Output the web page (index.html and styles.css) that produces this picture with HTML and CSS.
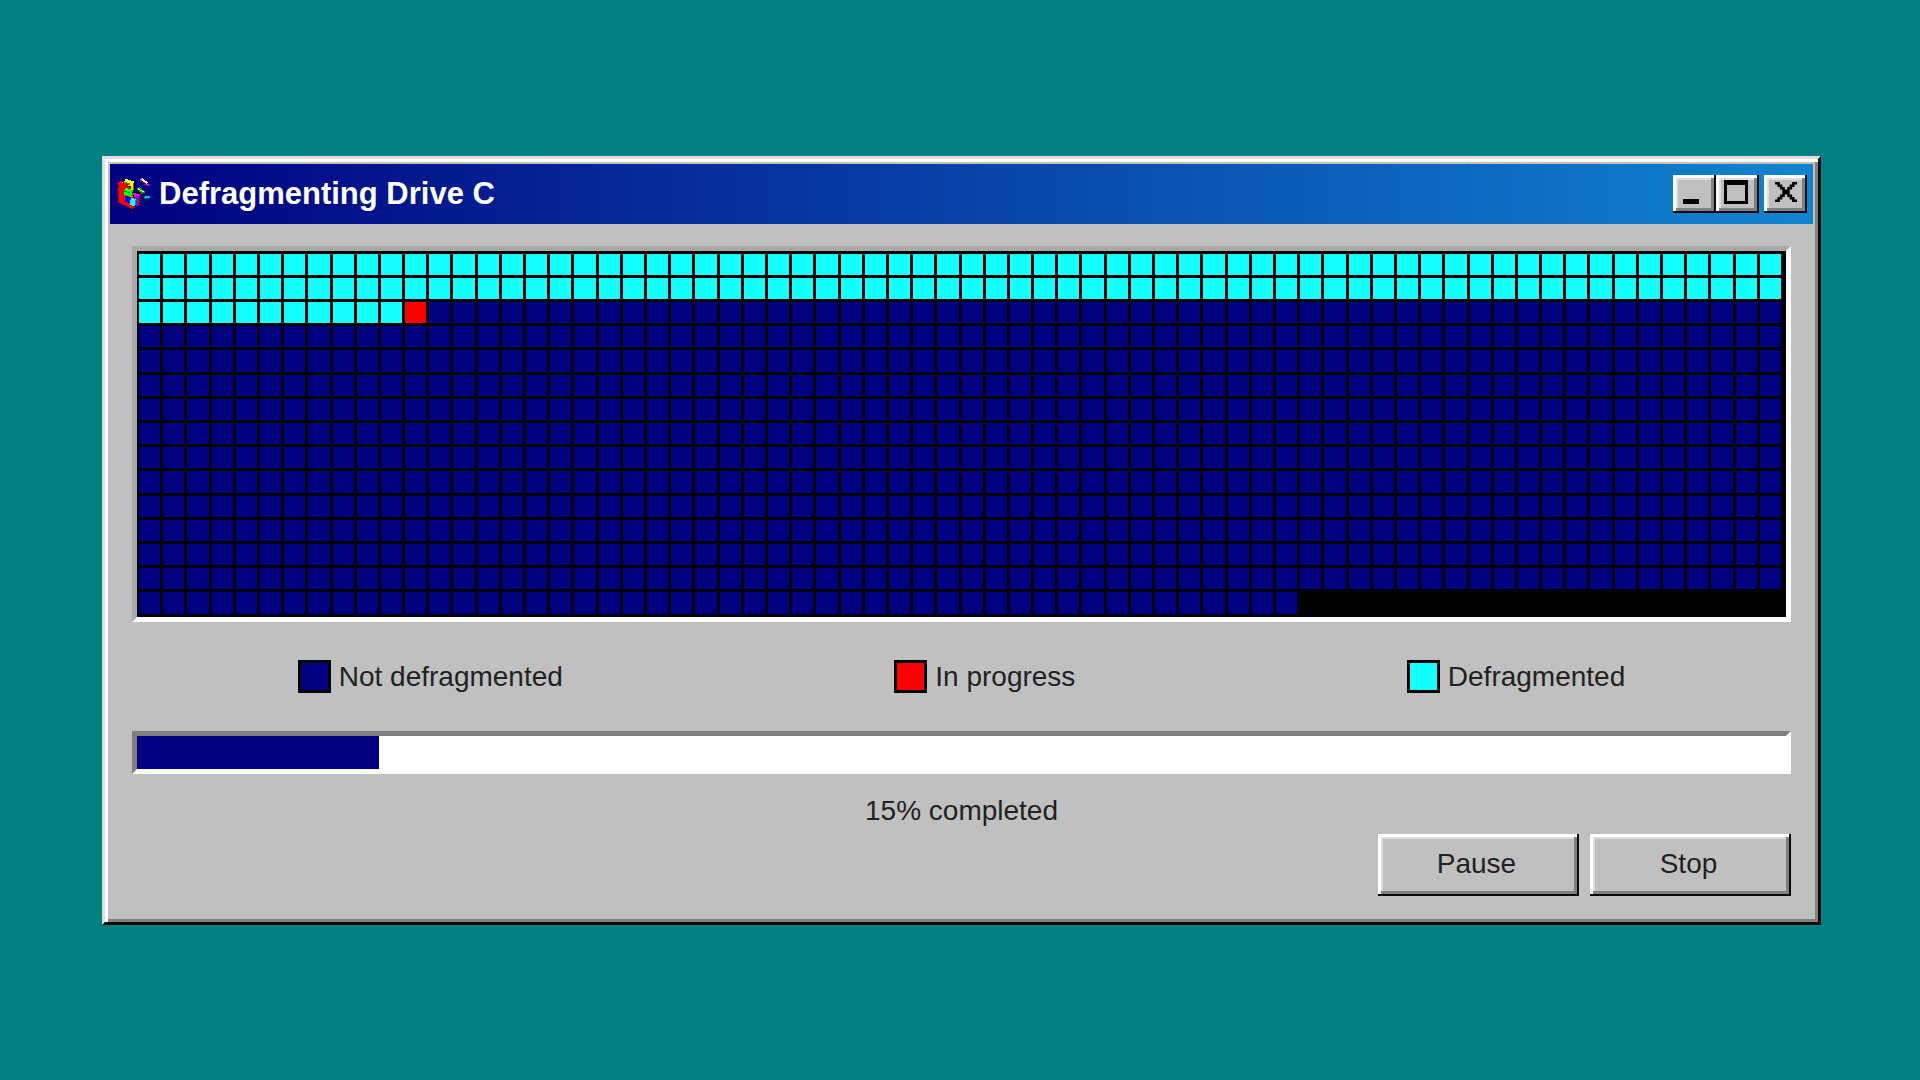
FILE: index.html
```html
<!DOCTYPE html>
<html lang="en">
<head>
<meta charset="utf-8">
<title>Defragmenting Drive C</title>
<link rel="stylesheet" href="styles.css">
</head>
<body>
<main class="window">
  <header class="titlebar">
    <svg class="app-icon" viewBox="0 0 120 120" aria-hidden="true">
      <path fill="#000" d="M54 24h9v30h12v3h5v36h-9v3h-8v6h-6v5h-9v-5h9z"/>
      <path fill="#f00" d="M12 24h6v-3h9v3h9v6h9v9h12v66h-6v-3h-6v-3h-6v-4h-9v-4h-9v-5h-9z"/>
      <path fill="#a00" d="M12 27h3v57h-3zM27 24h6v3h9v6h-6v-3h-9zM57 96h6v6h-6z"/>
      <path fill="#ff0" d="M33 15h9v3h9v3h9v27h-9v-12h-9v-6h-12v-9h3z"/>
      <path fill="#860" d="M57 27h3v24h-3zM30 24h9v3h9v6h-6v-3h-12z"/>
      <path fill="#fff" d="M36 18h3v3h-3zM42 21h3v3h-3zM48 21h3v3h-3zM24 24h3v3h-3z"/>
      <path fill="#0f0" d="M30 48h3v-6h9v3h9v3h6v21h-12v-3h-9v-3h-6z"/>
      <path fill="#090" d="M54 48h3v18h-3zM30 51h9v3h9v3h-9v-3h-9z"/>
      <path fill="#00f" d="M33 66h9v3h9v18h-9v-3h-9z"/>
      <path fill="#f0f" d="M57 57h9v3h12v9h-18v-6h-3z"/>
      <path fill="#a0a" d="M60 69h6v-3h12v27h-6v3h-6v-18h-6z"/>
      <path fill="#606" d="M75 66h3v27h-3z"/>
      <path fill="#0ff" d="M48 78h3v-6h9v3h6v18h-3v3h-9v-3h-6z"/>
      <path fill="#099" d="M63 78h3v15h-3z"/>
      <path fill="#fff" d="M36 45h3v3h-3zM42 48h3v3h-3zM54 75h3v3h-3z"/>
      <path fill="#f0f" d="M78 15h6v3h3v3h3v3h6v3h3v3h6v6h-6v-3h-6v-3h-3v-3h-6v-6h-6z"/>
      <path fill="#fff" d="M84 12h3v3h3v3h3v3h6v3h3v3h-3v3h-3v-3h-3v-3h-6v-3h-3v-3h-3z"/>
      <path fill="#606" d="M84 21h3v3h3v3h6v3h-6v-3h-6z"/>
      <path fill="#0a0" d="M69 42h6v-3h3v3h6v6h6v3h3v6h-6v3h-6v-6h-6v-6h-6z"/>
      <path fill="#cfc" d="M72 42h3v3h3v3h6v3h6v3h-6v-3h-6v-3h-6z"/>
      <path fill="#0cc" d="M90 69h3v-3h15v6h-3v3h-15z"/>
      <path fill="#055" d="M90 72h15v3h-15z"/>
    </svg>
    <h1 class="title">Defragmenting Drive C</h1>
    <div class="controls">
      <button class="control" type="button" aria-label="Minimize">
        <svg class="glyph" viewBox="0 0 24 24" shape-rendering="crispEdges"><path d="M2 19h16v5H2z"/></svg>
      </button>
      <button class="control" type="button" aria-label="Maximize">
        <svg class="glyph" viewBox="0 0 24 24" shape-rendering="crispEdges"><path fill-rule="evenodd" d="M0 0h24v24H0zM3 5v16h18V5z"/></svg>
      </button>
      <button class="control control-close" type="button" aria-label="Close">
        <svg class="glyph-close" viewBox="0 0 9 8" preserveAspectRatio="none"><path d="M0 0h2v1h1v1h1v1h1v-1h1v-1h1v-1h2v1h-1v1h-1v1h-1v2h1v1h1v1h1v1h-2v-1h-1v-1h-1v-1h-1v1h-1v1h-1v1h-2v-1h1v-1h1v-1h1v-2h-1v-1h-1v-1h-1z"/></svg>
      </button>
    </div>
  </header>

  <div class="content">
    <div class="board" id="board" role="img" aria-label="Drive map"></div>

    <ul class="legend">
      <li class="legend-item"><span class="swatch pending"></span>Not defragmented</li>
      <li class="legend-item"><span class="swatch active"></span>In progress</li>
      <li class="legend-item"><span class="swatch done"></span>Defragmented</li>
    </ul>

    <progress class="progress" id="progress" max="1000" value="147"></progress>
    <label class="status" for="progress">15% completed</label>

    <div class="actions">
      <button class="action" type="button">Pause</button>
      <button class="action" type="button">Stop</button>
    </div>
  </div>
</main>
<script src="board.js"></script>
</body>
</html>
```
FILE: styles.css
```css
* {
  box-sizing: border-box;
}

body {
  margin: 0;
  min-height: 100vh;
  padding: 0 99px 0 102px;
  display: flex;
  align-items: center;
  background: #008080;
  color: #222;
  font: 28px/36px "Liberation Sans", Arial, sans-serif;
}

.window {
  flex: 1;
  min-width: 0;
  padding: 5px;
  background: #c0c0c0;
  border: 3px solid;
  border-color: #dfdfdf #0a0a0a #0a0a0a #dfdfdf;
  box-shadow: inset 3px 3px #fff, inset -3px -3px #808080;
}

.titlebar {
  display: flex;
  align-items: center;
  height: 60px;
  padding: 0 6px 0 4px;
  background: linear-gradient(90deg, #000080, #1084d0);
}

.app-icon {
  width: 40px;
  height: 40px;
}

.title {
  flex: 1;
  margin: 0 0 0 5px;
  color: #fff;
  font-size: 31px;
  font-weight: 700;
  line-height: 36px;
}

.controls {
  display: flex;
}

.control,
.action {
  display: flex;
  align-items: center;
  justify-content: center;
  margin: 0;
  background: #c0c0c0;
  color: #222;
  font: inherit;
  border: 0;
  box-shadow: inset -2px -2px #0a0a0a, inset 3px 3px #fff, inset -5px -5px #808080, inset 5px 5px #dfdfdf;
}

.control {
  width: 43px;
  height: 38px;
  padding: 0 3px 3px 0;
}

.control-close {
  margin-left: 5px;
  padding-right: 0;
}

.glyph {
  width: 24px;
  height: 24px;
  fill: #000;
}

.glyph-close {
  width: 22px;
  height: 20px;
  fill: #000;
}

.content {
  display: flex;
  flex-direction: column;
  padding: 22px 22px 21px;
}

.board {
  display: grid;
  grid-template-columns: repeat(68, 1fr);
  grid-template-rows: repeat(15, 1fr);
  gap: 3px;
  aspect-ratio: 1659 / 376;
  padding: 3px 5px 3px 2px;
  background: #000;
  border: 5px solid;
  border-color: #a9a9a9 #fff #fff #a9a9a9;
}

.pending {
  background: #000080;
}

.active {
  background: #f00;
}

.done {
  background: #14ffff;
}

.legend {
  display: flex;
  justify-content: space-around;
  margin: 37px 0 36px;
  padding: 0;
  list-style: none;
}

.legend-item {
  display: flex;
  align-items: center;
  gap: 8px;
}

.swatch {
  width: 33px;
  height: 33px;
  border: 3px solid #000;
}

.progress {
  appearance: none;
  display: block;
  width: 100%;
  height: 43px;
  background: #fff;
  border: 5px solid;
  border-color: #808080 #fff #fff #808080;
}

.progress::-webkit-progress-bar {
  background: #fff;
}

.progress::-webkit-progress-value {
  background: #000080;
}

.status {
  margin: 19px 0 5px;
  text-align: center;
}

.actions {
  display: flex;
  justify-content: flex-end;
  gap: 11px;
}

.action {
  width: 201px;
  height: 62px;
  padding: 0 4px 2px 0;
}
```
FILE: board.js
```js
const TOTAL = 1000;
const DONE = 147;
const board = document.getElementById("board");

for (let i = 0; i < TOTAL; i++) {
  const cell = document.createElement("span");
  cell.className = i < DONE ? "done" : i === DONE ? "active" : "pending";
  board.append(cell);
}
```
